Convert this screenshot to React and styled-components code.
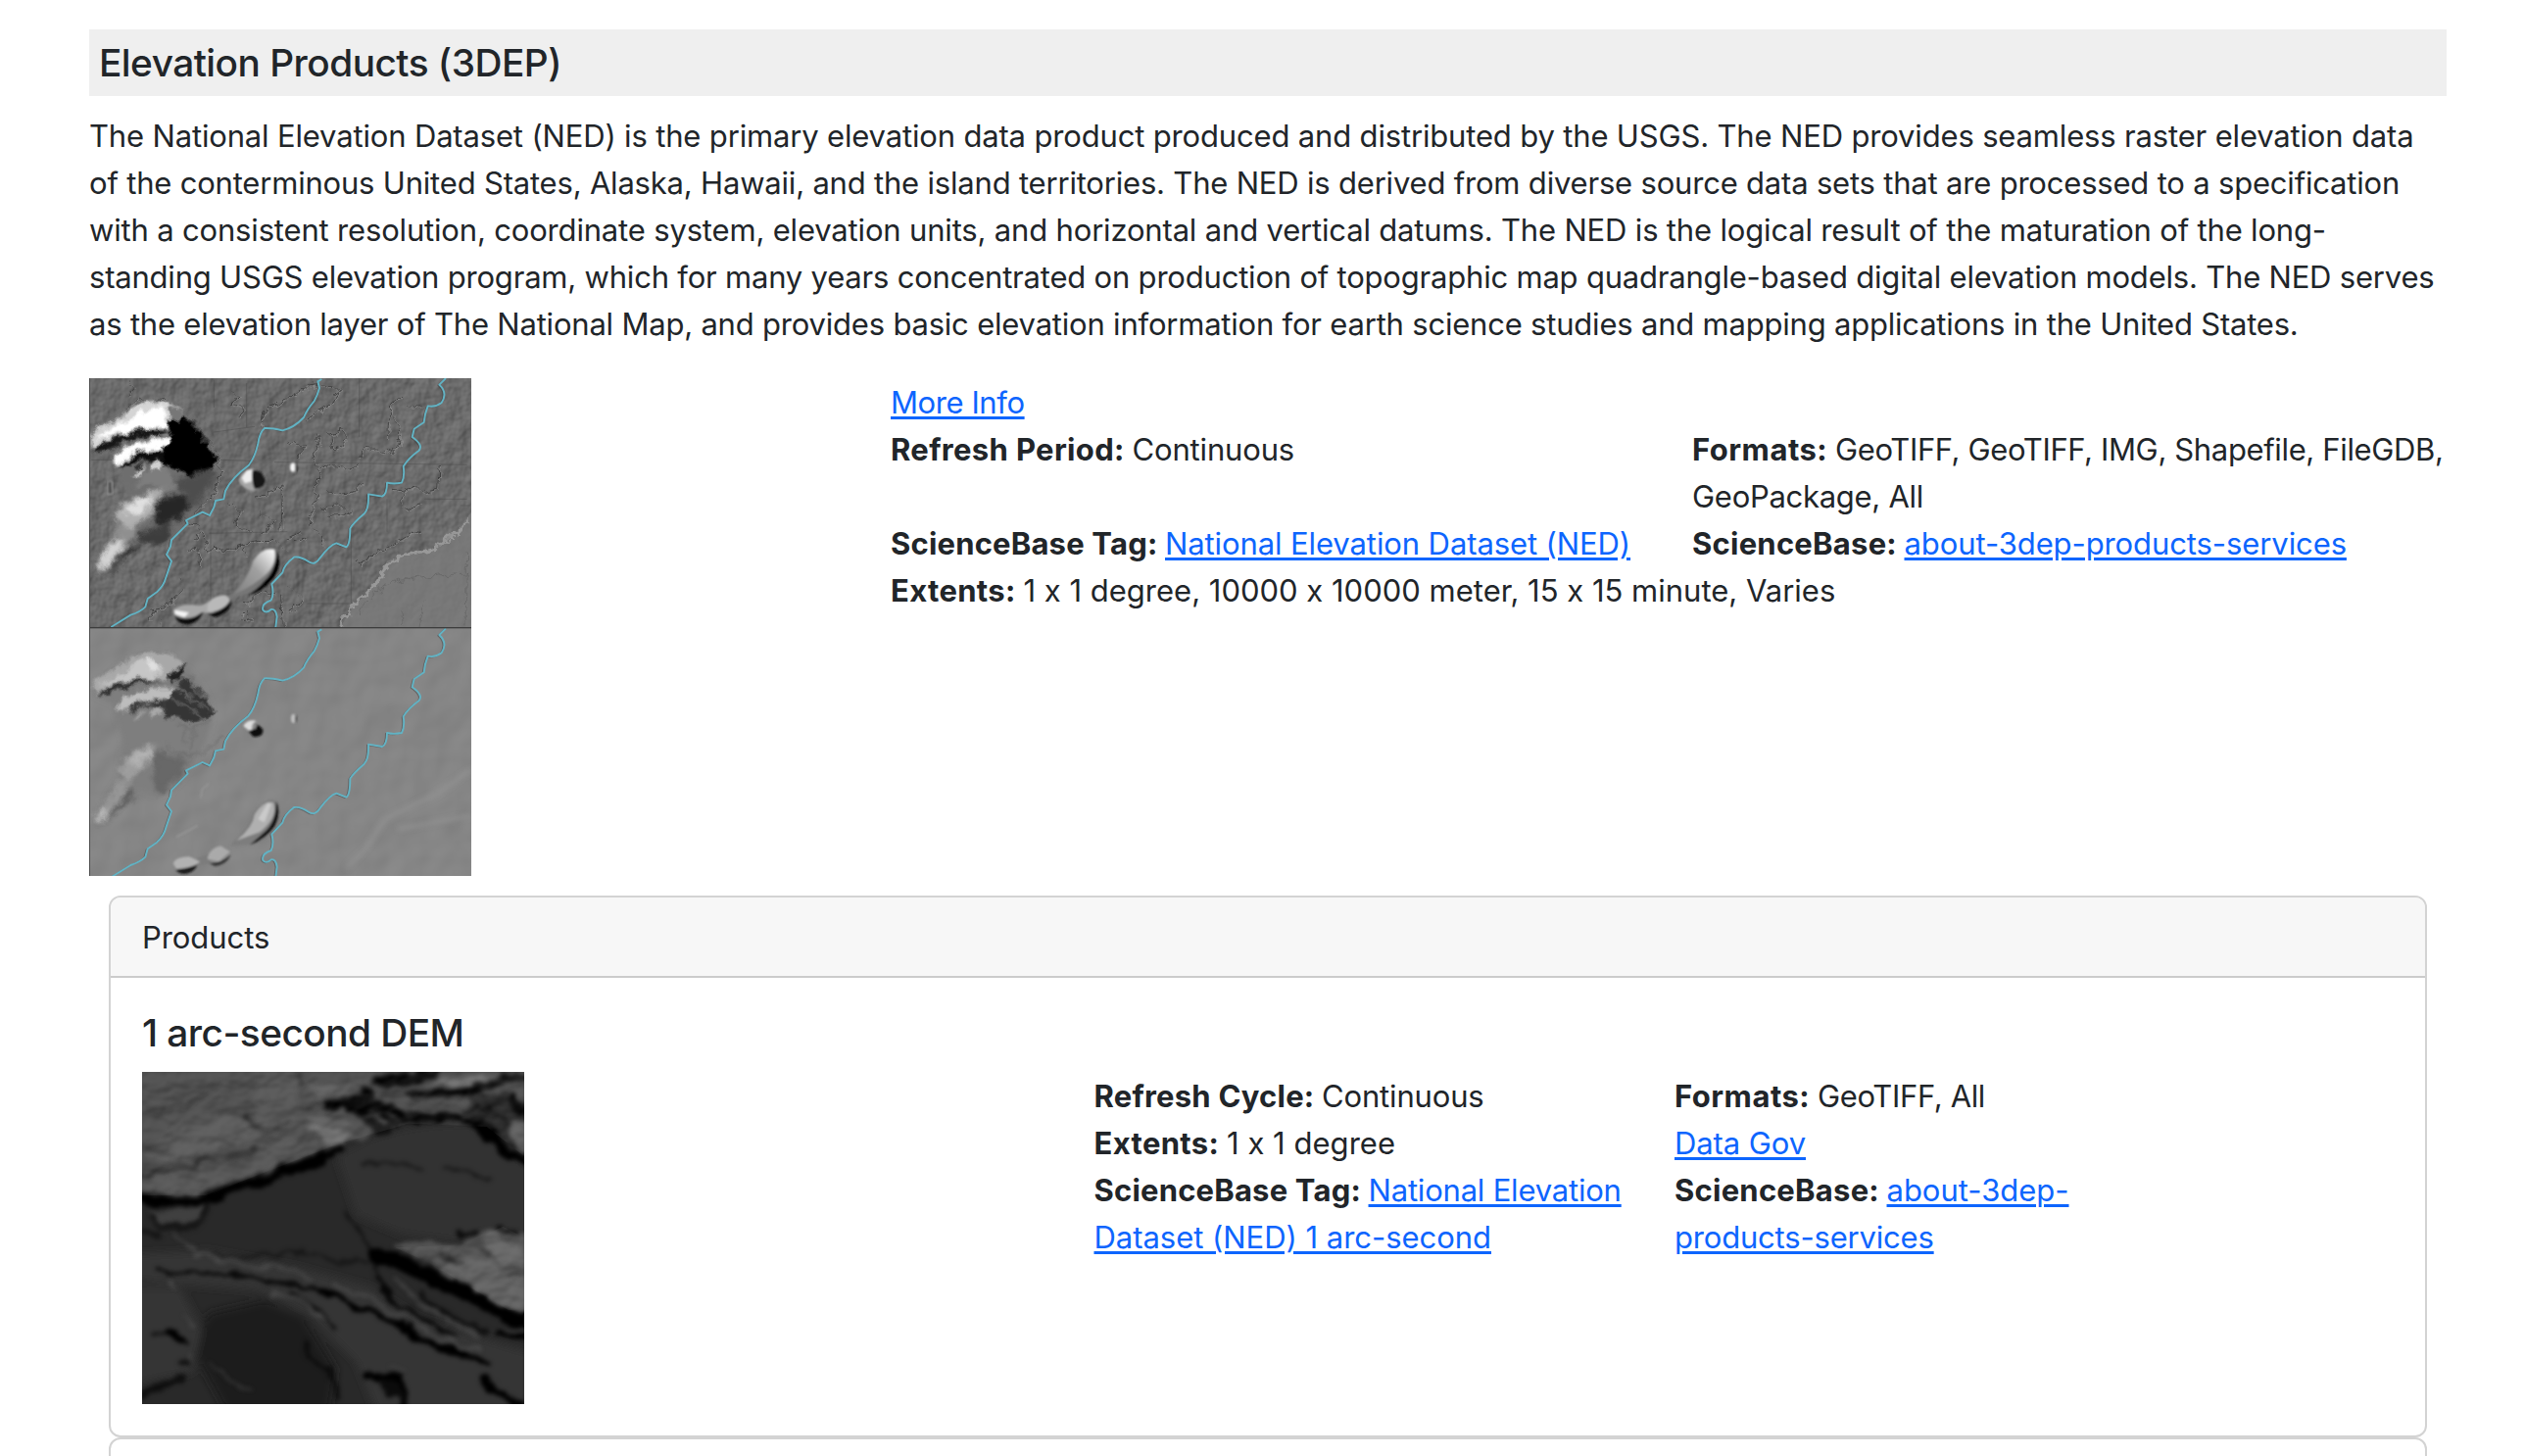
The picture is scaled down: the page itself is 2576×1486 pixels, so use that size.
import React from "react";
import styled, { createGlobalStyle } from "styled-components";

const GlobalStyle = createGlobalStyle`
  *, *::before, *::after { box-sizing: border-box; }
  html { overflow: hidden; }
  body {
    margin: 0;
    height: 1486px;
    overflow: hidden;
    background: #fff;
    color: #212529;
    font-family: Inter, "Liberation Sans", sans-serif;
    font-size: 31px;
    line-height: 48px;
    font-feature-settings: "calt" 0;
  }
`;

const Page = styled.main`
  width: 2406px;
  margin-left: 91px;
  padding-top: 30px;
`;
const TitleBar = styled.header`
  padding: 10px;
  background: #efefef;
`;
const Heading = styled.h2`
  margin: 0;
  font-size: 38.8px;
  font-weight: 500;
  line-height: 48px;
  letter-spacing: ${(p) => p.$ls}px;
`;
const Description = styled.p`
  margin: 17px 0 31px;
`;
const Line = styled.span`
  display: block;
  white-space: nowrap;
  letter-spacing: ${(p) => p.$ls}px;
`;
const Overview = styled.section`
  display: grid;
  grid-template-columns: 818px 1fr;
  height: 508px;
`;
const Facts = styled.div`
  display: grid;
  grid-template-columns: 818px 1fr;
  align-content: start;
  padding-top: 1px;
`;
const Fact = styled.div`
  grid-column: ${(p) => (p.$wide ? "1 / -1" : "auto")};
  white-space: nowrap;
`;
const ProductFacts = styled.div`
  padding-top: 1px;
`;
const Label = styled.strong`
  font-weight: 700;
  white-space: pre;
  letter-spacing: ${(p) => p.$ls}px;
`;
const Value = styled.span`
  letter-spacing: ${(p) => p.$ls}px;
`;
const Link = styled.a`
  color: #0d65fe;
  letter-spacing: ${(p) => p.$ls}px;
  text-decoration: underline;
  text-decoration-thickness: 3px;
  text-underline-offset: 3px;
`;
const Card = styled.section`
  width: 2366px;
  margin: ${(p) => p.$top}px 0 0 20px;
  border: 2px solid #d3d3d3;
  border-radius: 12px;
  height: ${(p) => p.$height}px;
  overflow: hidden;
`;
const CardHeader = styled.header`
  padding: 17px 32px 15px;
  background: #f7f7f7;
  border-bottom: 2px solid #cbcbcb;
`;
const CardBody = styled.div`
  padding: 32px;
`;
const ProductRow = styled.div`
  display: grid;
  grid-template-columns: 971.5px 592.5px 1fr;
  margin-top: 16px;
`;
const Picture = styled.svg`
  display: block;
  width: ${(p) => p.$w}px;
  height: ${(p) => p.$h}px;
`;

const RIVER_A =
  "M745 33L733 40L738 60Q732 82 722 100Q700 125 690 150Q660 182 625 190Q590 182 570 183Q555 195 550 230Q540 275 520 298Q470 335 450 375L445 400L420 405L415 425L402 450L380 440L330 465L335 475L285 525L282 545L270 570L285 590L268 640Q262 665 240 685L212 705L205 730Q190 745 160 755L100 792";
const RIVER_B =
  "M1125 30L1105 50Q1132 75 1112 105Q1092 120 1070 115Q1060 140 1058 165L1028 185L1022 210Q1058 235 1042 252Q1010 275 995 300Q1000 330 990 350Q965 355 945 350Q945 385 930 392L888 385Q890 430 875 445Q840 475 832 490Q832 540 820 547L790 535Q770 540 740 580Q725 605 705 592Q680 575 660 578Q630 600 625 625L592 660Q600 690 590 710Q560 720 565 740Q575 752 590 738Q605 735 608 760L604 792";

const CREEKS = [
  "M155 35L170 60L150 80M140 130Q165 95 220 98Q280 90 300 120Q370 170 395 220Q450 290 432 330Q420 400 350 440",
  "M470 70L490 85L470 110L500 115L495 145M565 170Q560 130 600 110Q650 90 700 55Q760 40 800 70L770 110L700 160",
  "M1058 120Q1020 125 995 95Q950 90 955 130Q980 155 985 190Q1000 220 960 260Q920 245 895 250Q860 240 865 270M955 130Q945 170 950 220",
  "M730 200L740 230L720 270L735 310L725 360L735 400L710 450L700 480M620 360Q580 390 540 390M620 365L625 500",
  "M740 300Q800 290 830 310L860 290M760 380Q800 400 840 380L870 350M740 430Q800 400 830 440Q800 460 760 450",
  "M1105 290L1100 370L1060 380L1030 360L1000 375L960 370M1000 380Q970 410 1000 430L1050 420",
  "M640 520L680 500L700 520L660 530M700 480L745 510L750 540M860 600L920 560L960 540L1000 520L1045 490",
  "M320 480Q370 475 380 500L350 520M380 500L400 560M400 555L470 550Q530 525 600 530L640 560M510 550Q500 565 515 575",
  "M220 770L230 740L260 735L300 700L330 670L310 650M260 790L250 770M330 550L370 560L370 610",
  "M500 760L520 740L530 765L500 770M510 720L560 680L600 690M640 660L690 710L640 740L670 750M620 690L625 790",
  "M460 420L500 440L480 480L530 500M560 440L600 470L560 500M640 220L690 240L670 270M770 200L810 190L820 240L780 250Z",
];
const ROADS = "M40 280L160 280M415 35L415 120M515 45L515 180M405 500L405 790M860 30L860 210M835 500L835 720M400 505L640 500M700 720L830 720M435 280L530 283M600 287L1190 295M620 365L625 500M945 400L945 500M1060 400L1190 400M415 195L540 178M1170 420L1200 420";

const Rivers = () => (
  <g fill="none" strokeLinejoin="round">
    <g stroke="#333" strokeWidth="4" opacity=".4" transform="translate(-4 2)">
      <path d={RIVER_A} />
      <path d={RIVER_B} />
    </g>
    <g stroke="#62b3c4" strokeWidth="5.6">
      <path d={RIVER_A} />
      <path d={RIVER_B} />
    </g>
  </g>
);

const DetailedRelief = () => (
  <g clipPath="url(#upper)">
    <rect x="33" y="30" width="1170" height="764" fill="#6b6b6b" />
    <rect x="33" y="30" width="1170" height="764" filter="url(#ground)" opacity=".45" />
    <path d="M800 794L845 725Q910 670 945 590L985 575L1100 548L1150 510L1203 440V794Z" fill="#7c7c7c" opacity=".8" />
    <g fill="none" strokeLinejoin="round" filter="url(#rough)">
      <g stroke="#353535" strokeWidth="3" opacity=".75">{CREEKS.map((d) => <path key={d} d={d} />)}</g>
      <g stroke="#a1a1a1" strokeWidth="2.5" opacity=".55" transform="translate(3 3)">{CREEKS.map((d) => <path key={d} d={d} />)}</g>
      <path d="M800 785L845 720Q925 660 940 605L980 575L1095 550L1140 512L1165 510L1190 460" stroke="#a4a4a4" strokeWidth="9" opacity=".75" />
      <path d="M860 750Q900 670 980 650L1200 625M990 740L995 790M1060 710L1040 790M1190 560L1185 790" stroke="#585858" strokeWidth="3" opacity=".45" />
    </g>
    <path d={ROADS} fill="none" stroke="#484848" strokeWidth="2.5" opacity=".5" />
    <g filter="url(#craggy)">
      <path d="M40 200Q80 150 130 130Q190 80 280 105Q360 130 400 220Q440 300 410 350Q360 450 290 520Q240 550 190 520Q150 540 125 590Q90 630 50 635Q60 570 120 520Q120 420 150 390Q110 320 110 270Q80 260 45 250Z" fill="#6e6e6e" filter="url(#blur8)" />
      <g filter="url(#blur5)">
        <path d="M36 205Q70 170 120 160Q150 110 210 104Q290 95 315 135L270 185Q190 180 130 200L60 240L36 238Z" fill="#d4d4d4" />
        <path d="M50 215Q120 170 170 150Q230 110 265 122L268 182Q170 185 105 205Z" fill="#fff" />
        <path d="M48 240Q130 205 180 190Q230 180 280 195L235 207Q150 210 120 235Q80 265 50 255Z" fill="#151515" />
        <path d="M110 280Q120 238 190 230Q245 200 292 210L275 258Q200 240 150 295L115 300Z" fill="#fff" />
        <path d="M122 303Q150 268 200 250L285 245L270 295Q210 265 180 285Q150 295 130 308Z" fill="#0b0b0b" />
        <path d="M235 290L265 295L285 350L330 360L270 375L220 350L170 365L200 320Z" fill="#7d7d7d" />
      </g>
      <g filter="url(#blur4)">
        <path d="M270 175Q315 125 335 150Q385 190 400 245Q440 280 412 305Q370 345 325 328Q300 305 262 296L258 245Q290 225 285 205Z" fill="#010101" />
        <path d="M280 112L318 130L315 160L285 160Z" fill="#777" />
        <path d="M335 155L370 185L390 230" stroke="#4b4b4b" strokeWidth="5" fill="none" />
        <path d="M225 285L255 290L250 315L225 310ZM165 335L208 288L190 330Z" fill="#d0d0d0" />
        <path d="M170 303L215 280L182 322Z" fill="#303030" />
      </g>
      <g filter="url(#blur8)">
        <path d="M120 465Q122 400 190 395Q230 362 265 375L245 440Q200 450 160 505Z" fill="#b0b0b0" />
        <path d="M140 430L220 388L222 420L165 450Z" fill="#e2e2e2" />
        <path d="M240 400Q300 370 335 400Q350 440 310 460Q260 490 225 460Z" fill="#262626" />
        <path d="M290 345L405 310L415 345L350 430L330 390Z" fill="#4e4e4e" />
        <path d="M180 505L280 470L285 515L250 538Q200 545 185 525Z" fill="#3d3d3d" />
        <path d="M125 480L180 490Q180 550 130 585Q105 620 60 630Q60 580 90 545Z" fill="#8f8f8f" />
        <path d="M75 565Q105 520 140 525L115 575Q85 610 60 620Q55 590 75 565Z" fill="#d4d4d4" />
        <path d="M175 520Q170 570 130 590Q110 620 75 632L115 590Q145 560 175 520Z" fill="#0c0c0c" />
      </g>
    </g>
    <path d="M90 345L103 345L105 385L90 385Z" fill="#444" stroke="#aaa" strokeWidth="3" filter="url(#blur4)" />
    <g filter="url(#blur4)">
      <path d="M490 342Q505 308 535 306L575 345Q570 372 530 375Q500 367 490 342Z" fill="#a5a5a5" />
      <path d="M500 335L515 312L537 308L532 345L510 352Z" fill="#eee" />
      <path d="M533 310L560 318L574 345Q568 370 540 370Q528 345 533 310Z" fill="#141414" />
      <ellipse cx="657" cy="303" rx="9" ry="14" fill="#f6f6f6" />
      <path d="M664 290Q678 305 664 321Z" fill="#111" />
    </g>
    <g filter="url(#blur4)">
      <path d="M465 695Q515 640 530 590Q560 542 600 550Q625 570 610 620Q590 670 530 695Q495 690 470 710Q460 745 420 760Q400 755 383 757Q360 788 325 783Q285 775 288 745Q310 718 350 722Q380 730 400 710Q430 690 465 695Z" fill="#767676" />
      <path d="M475 692Q525 635 535 590Q565 545 600 555Q612 610 550 650Q510 680 475 692Z" fill="url(#ridgeLight)" />
      <path d="M608 557Q628 600 597 644Q560 690 515 696Q550 675 570 650Q605 620 608 557Z" fill="#060606" />
      <path d="M290 740Q310 722 350 724Q380 732 400 712L415 748L375 748Q340 775 300 755Z" fill="#a8a8a8" />
      <path d="M295 760Q340 780 383 745Q370 783 330 784Q300 780 295 760Z" fill="#070707" />
      <path d="M395 730Q400 700 445 694Q470 702 460 722Q430 745 395 745Z" fill="#b9b9b9" />
      <path d="M395 752Q440 748 468 708Q470 748 420 762Z" fill="#0c0c0c" />
      <path d="M295 740L338 748L325 762L295 752Z" fill="#f4f4f4" />
    </g>
  </g>
);

const SmoothRelief = () => (
  <g clipPath="url(#lower)">
    <rect x="33" y="794" width="1170" height="760" fill="#868686" />
    <rect x="33" y="794" width="1170" height="760" filter="url(#softGround)" opacity=".09" />
    <g transform="translate(0 780)">
      <g filter="url(#blur8)" fill="none">
        <path d="M820 750L880 690L940 600L1100 520L1200 450M980 630L1200 590" stroke="#939393" strokeWidth="9" />
        <path d="M50 220Q80 150 180 95Q290 75 360 170Q430 250 400 330Q370 430 280 520Q220 530 180 500Q140 560 60 610Q60 560 120 480Q120 420 140 370Q110 280 110 250Z" fill="#7e7e7e" />
      </g>
      <g filter="url(#craggy)">
        <g filter="url(#blur5)">
          <path d="M38 195Q65 155 110 145Q170 80 240 88Q300 90 315 125L270 175Q190 165 110 185L60 215Z" fill="#a8a8a8" />
          <path d="M55 195L130 160L180 115Q240 100 260 145L240 170Q160 165 100 185Z" fill="#c6c6c6" />
          <path d="M210 110L238 115L245 145L215 150Z" fill="#e0e0e0" />
          <path d="M60 218Q120 178 180 172L255 180Q160 185 105 212Q80 228 60 218Z" fill="#2e2e2e" />
          <path d="M112 262Q130 220 190 212Q240 190 292 200L282 235Q200 225 150 268Z" fill="#bdbdbd" />
          <path d="M145 265Q180 235 270 230L265 268Q230 245 200 250Q175 282 145 265Z" fill="#383838" />
          <path d="M225 258L255 262L245 285L225 280ZM165 300L215 260L195 290Z" fill="#a8a8a8" />
        </g>
        <g filter="url(#blur4)">
          <path d="M262 245L300 205L320 165Q375 190 395 240L418 272Q380 305 340 305Q300 280 266 296Z" fill="#343434" />
          <path d="M268 172L320 125L328 152L290 185Z" fill="#202020" />
          <path d="M300 185L330 230L355 215M340 160L360 205L395 235M280 235L340 255L385 290M310 210L370 250L400 265" fill="none" stroke="#6a6a6a" strokeWidth="5" />
          <path d="M300 310Q360 340 410 290M320 310L330 370M360 320L340 390M255 390Q320 430 400 380L450 340M270 370Q300 410 360 400" fill="none" stroke="#6e6e6e" strokeWidth="4" />
        </g>
        <g filter="url(#blur8)">
          <path d="M130 460Q140 385 230 370L245 395L225 430Q180 440 160 490Z" fill="#9e9e9e" />
          <path d="M150 415L220 380L230 410L165 435Z" fill="#b3b3b3" />
          <path d="M228 385Q280 400 335 425Q300 500 245 518Q222 490 228 385Z" fill="#686868" />
          <path d="M120 485L155 480L140 540Q110 590 55 615Q45 590 80 555Z" fill="#969696" />
          <path d="M160 500L170 530L120 580L75 612L115 560Z" fill="#5f5f5f" />
          <path d="M55 590L80 560L85 595L60 610Z" fill="#bbb" />
        </g>
      </g>
      <g filter="url(#blur4)">
        <path d="M505 315Q515 295 540 298L552 315L530 335Z" fill="#ddd" />
        <path d="M540 302L565 325Q567 352 535 347L520 330L535 325Z" fill="#101010" />
        <path d="M535 305L548 308L542 325L530 322Z" fill="#888" />
        <ellipse cx="658" cy="292" rx="7" ry="14" fill="#c0c0c0" />
        <path d="M665 280Q674 294 663 307Z" fill="#333" />
        <path d="M465 680Q520 625 535 580Q570 535 600 542Q625 565 605 615Q580 660 530 678Z" fill="#7d7d7d" />
        <path d="M485 665Q535 625 540 585Q570 540 597 550Q612 595 555 640Z" fill="#b0b0b0" />
        <path d="M550 600L580 550L590 555L570 610Z" fill="#cacaca" />
        <path d="M605 545Q623 575 602 620Q575 660 525 679L570 640Q608 605 605 545Z" fill="#0d0d0d" />
        <path d="M350 725L400 705L405 735L365 742Z" fill="#7c7c7c" />
        <path d="M290 735Q300 714 340 715L372 730L355 745L300 752Z" fill="#b2b2b2" />
        <path d="M298 754Q325 755 365 738Q355 765 325 768Q303 766 298 754Z" fill="#1a1a1a" />
        <path d="M395 722Q400 690 435 682L465 700L430 730Z" fill="#aaa" />
        <path d="M400 735Q440 735 467 708Q455 740 418 744Z" fill="#343434" />
        <path d="M375 535L378 510L400 490M300 655L365 620" stroke="#989898" strokeWidth="4" fill="none" />
      </g>
    </g>
  </g>
);

const ReliefComparison = () => (
  <Picture $w={390} $h={508} viewBox="33 30 1170 1524" preserveAspectRatio="none">
    <defs>
      <clipPath id="upper"><rect x="33" y="30" width="1170" height="764" /></clipPath>
      <clipPath id="lower"><rect x="33" y="794" width="1170" height="760" /></clipPath>
      <linearGradient id="ridgeLight" x1="0" y1="1" x2="1" y2="0">
        <stop offset="0" stopColor="#808080" />
        <stop offset=".55" stopColor="#a0a0a0" />
        <stop offset="1" stopColor="#fff" />
      </linearGradient>
      <filter id="blur4" x="-20%" y="-20%" width="140%" height="140%"><feGaussianBlur stdDeviation="3" /></filter>
      <filter id="blur5" x="-20%" y="-20%" width="140%" height="140%"><feGaussianBlur stdDeviation="4.5" /></filter>
      <filter id="blur8" x="-20%" y="-20%" width="140%" height="140%"><feGaussianBlur stdDeviation="8" /></filter>
      <filter id="rough" colorInterpolationFilters="sRGB">
        <feTurbulence type="fractalNoise" baseFrequency=".035" numOctaves="3" seed="4" />
        <feDisplacementMap in="SourceGraphic" scale="34" xChannelSelector="R" yChannelSelector="G" />
      </filter>
      <filter id="craggy" colorInterpolationFilters="sRGB">
        <feTurbulence type="fractalNoise" baseFrequency=".03" numOctaves="3" seed="7" />
        <feDisplacementMap in="SourceGraphic" scale="32" xChannelSelector="R" yChannelSelector="G" />
      </filter>
      <filter id="ground" x="0" y="0" width="100%" height="100%" colorInterpolationFilters="sRGB">
        <feTurbulence type="fractalNoise" baseFrequency=".022 .02" numOctaves="3" seed="9" />
        <feDiffuseLighting surfaceScale="7" diffuseConstant=".6" lightingColor="#fff">
          <feDistantLight azimuth="225" elevation="45" />
        </feDiffuseLighting>
      </filter>
      <filter id="softGround" x="0" y="0" width="100%" height="100%" colorInterpolationFilters="sRGB">
        <feTurbulence type="fractalNoise" baseFrequency=".01" numOctaves="2" seed="5" />
        <feDiffuseLighting surfaceScale="18" diffuseConstant=".74" lightingColor="#fff">
          <feDistantLight azimuth="225" elevation="45" />
        </feDiffuseLighting>
      </filter>
    </defs>
    <DetailedRelief />
    <Rivers />
    <SmoothRelief />
    <g clipPath="url(#lower)"><g transform="translate(0 766)"><Rivers /></g></g>
    <rect x="33" y="792" width="1170" height="4" fill="#3d3d3d" />
    <rect x="33" y="30" width="3" height="1524" fill="#4a4a4a" />
  </Picture>
);

const ArcSecondRelief = () => (
  <Picture $w={390} $h={339} viewBox="45 42 1170 1017" preserveAspectRatio="none">
    <defs>
      <filter id="soft" x="-10%" y="-10%" width="120%" height="120%" colorInterpolationFilters="sRGB">
        <feTurbulence type="fractalNoise" baseFrequency=".018" numOctaves="3" seed="3" result="n" />
        <feDisplacementMap in="SourceGraphic" in2="n" scale="42" xChannelSelector="R" yChannelSelector="G" />
        <feGaussianBlur stdDeviation="6.5" />
      </filter>
      <filter id="softer" x="-20%" y="-20%" width="140%" height="140%"><feGaussianBlur stdDeviation="13" /></filter>
      <filter id="rock" x="0" y="0" width="100%" height="100%" colorInterpolationFilters="sRGB">
        <feTurbulence type="fractalNoise" baseFrequency=".012 .018" numOctaves="3" seed="12" />
        <feDiffuseLighting surfaceScale="28" diffuseConstant=".65" lightingColor="#fff">
          <feDistantLight azimuth="240" elevation="45" />
        </feDiffuseLighting>
        <feGaussianBlur stdDeviation="4" />
      </filter>
      <clipPath id="rocky"><path d="M45 42H1215V300L1100 210L860 200L640 265L240 420H45ZM820 580L1030 570L1150 515L1215 550V775L1165 770L920 625Z" /></clipPath>
    </defs>
    <rect x="45" y="42" width="1170" height="1017" fill="#292929" />
    <g filter="url(#softer)">
      <path d="M640 300Q800 190 1060 200L1230 330V540L1000 560L840 540L700 480Z" fill="#313131" />
      <path d="M20 600L250 590L520 640L740 700L900 800L1230 900V1080H760L700 930L560 790L400 710L20 680Z" fill="#363636" />
      <path d="M250 780L420 740L540 790L640 950L620 1080H300L190 880Z" fill="#1e1e1e" />
      <path d="M20 700L160 700L230 830L200 960L20 1000Z" fill="#343434" />
      <path d="M780 930L900 920L1080 950L1150 1080H870L850 990Z" fill="#353535" />
    </g>
    <g filter="url(#soft)">
      <path d="M10 10H1250V120L1060 150L850 160L740 240L640 262L520 315L400 360L240 415H10Z" fill="#4d4d4d" />
      <path d="M390 20L510 20L530 180L440 240L390 170Z" fill="#555" />
      <path d="M170 190L360 165L400 240L300 270L130 320L50 300Z" fill="#595959" />
      <path d="M545 205L650 210L690 245L610 265Z" fill="#757575" />
      <path d="M540 175L660 180L680 205L580 205Z" fill="#606060" />
      <path d="M560 85L700 70L680 110L580 120Z" fill="#606060" />
      <path d="M900 85L1050 55L1130 60L1100 85Z" fill="#727272" />
      <path d="M730 75L880 80L860 125L800 130Z" fill="#464646" />
      <path d="M880 130L1010 145L1030 180L900 170Z" fill="#454545" />
      <path d="M1040 120L1170 100L1250 190V310L1150 260L1050 185Z" fill="#262626" />
      <path d="M1165 240L1180 200L1250 190V295L1190 280Z" fill="#606060" />
      <path d="M20 380L220 325L400 285L480 240L560 275L400 345L230 410L20 415Z" fill="#555" />
      <path d="M60 465L240 455L230 490L130 515L90 500Z" fill="#404040" />
      <path d="M820 580L870 565L1030 570L1080 530L1150 515L1250 550V775L1165 770L1000 680L920 625Z" fill="#525252" />
      <path d="M950 620L1080 610L1250 690V770L1160 765L1040 695Z" fill="#626262" />
      <path d="M1080 545L1120 520L1160 570L1215 600V650L1140 620Z" fill="#666" />
    </g>
    <g fill="none" stroke="#000" strokeLinecap="round" strokeLinejoin="round" filter="url(#soft)">
      <path d="M10 437H240L290 425" strokeWidth="28" />
      <path d="M250 422L340 390L420 380L500 340L580 325L650 275" strokeWidth="28" />
      <path d="M480 345L600 305" strokeWidth="38" />
      <path d="M600 145L720 125L740 105M690 155L800 150L860 185L1000 185L1080 200M870 110L960 105L1080 100M760 68L860 62L940 48" strokeWidth="28" />
      <path d="M680 145L780 160" strokeWidth="45" />
      <path d="M710 180L780 225L800 205M750 165L830 200M1080 90L1150 60L1240 58" strokeWidth="19" stroke="#101010" />
      <path d="M1095 215L1130 255L1165 300L1240 315" strokeWidth="30" />
      <path d="M1185 115L1205 170" strokeWidth="24" />
      <path d="M1105 140L1160 200M1060 150L1140 175" strokeWidth="12" opacity=".6" />
      <path d="M765 600L850 630L950 680L1060 735L1180 795L1250 800" strokeWidth="47" />
      <path d="M1140 850L1250 860" strokeWidth="20" />
      <path d="M600 715L670 745L760 785L850 830L930 880L1020 895L1100 935" strokeWidth="19" />
      <path d="M90 655L250 655L400 675L490 690L590 710" strokeWidth="13" stroke="#0b0b0b" />
      <path d="M760 670L780 710L840 760L900 800L1000 850" strokeWidth="13" stroke="#060606" />
      <path d="M670 480L710 530L760 610L770 680" strokeWidth="9" opacity=".65" />
      <path d="M900 720L940 760L1100 840" strokeWidth="12" opacity=".6" />
      <path d="M70 485L110 520L170 520L230 495L245 455M45 530L100 540" strokeWidth="18" stroke="#151515" />
      <path d="M125 842L150 848L175 860" strokeWidth="27" />
      <path d="M85 845L130 845" strokeWidth="14" opacity=".6" />
      <path d="M170 930L190 930M40 1035L100 1000L170 985" strokeWidth="20" opacity=".65" />
      <path d="M735 970L760 985L840 980L850 1060" strokeWidth="25" />
      <path d="M770 990L830 985L850 1055L800 1040Z" fill="#0b0b0b" />
      <path d="M545 870L560 910L620 960L640 1045" strokeWidth="12" opacity=".6" />
      <path d="M1085 985L1130 1020L1210 1065" strokeWidth="22" />
      <path d="M500 720L590 780L640 830" strokeWidth="10" opacity=".65" />
      <path d="M270 600L420 610L530 590L640 620L740 620" strokeWidth="8" opacity=".45" />
      <path d="M970 335L1050 350L1110 370M720 325L850 320L900 345" strokeWidth="10" opacity=".5" />
      <path d="M1025 545L1070 525M1140 515L1190 535" strokeWidth="17" opacity=".75" />
      <path d="M970 605L1020 630M1090 580L1110 600M1170 665L1200 665" strokeWidth="12" opacity=".55" />
    </g>
    <g fill="none" stroke="#202020" strokeLinecap="round" filter="url(#soft)" opacity=".7">
      <path d="M30 365L130 350L220 315L290 300L390 280" strokeWidth="15" />
      <path d="M365 180L430 230L490 195M520 60L540 85M540 145L590 150" strokeWidth="13" />
      <path d="M60 155L140 155L210 130L280 65M50 275L130 300" strokeWidth="9" opacity=".6" />
    </g>
    <g fill="none" stroke="#585858" strokeLinecap="round" filter="url(#soft)" opacity=".6">
      <path d="M640 700L740 730L850 800L960 860L1080 895M820 680L900 750L1020 820L1080 850" strokeWidth="10" />
      <path d="M200 600L400 640L500 640L560 680M440 720L520 740L600 800M150 550L200 590M130 680L150 700" strokeWidth="9" />
      <path d="M250 940L370 1020M790 940L860 960M1155 840L1215 835M170 795L200 830M190 900L200 930" strokeWidth="8" opacity=".7" />
    </g>
    <g clipPath="url(#rocky)">
      <rect x="45" y="42" width="1170" height="1017" filter="url(#rock)" opacity=".12" />
    </g>
  </Picture>
);

const DESCRIPTION = [
  [-0.162, "The National Elevation Dataset (NED) is the primary elevation data product produced and distributed by the USGS. The NED provides seamless raster elevation data"],
  [-0.195, "of the conterminous United States, Alaska, Hawaii, and the island territories. The NED is derived from diverse source data sets that are processed to a specification"],
  [-0.171, "with a consistent resolution, coordinate system, elevation units, and horizontal and vertical datums. The NED is the logical result of the maturation of the long-"],
  [-0.203, "standing USGS elevation program, which for many years concentrated on production of topographic map quadrangle-based digital elevation models. The NED serves"],
  [-0.204, "as the elevation layer of The National Map, and provides basic elevation information for earth science studies and mapping applications in the United States."],
];

export default function App() {
  return (
    <>
      <GlobalStyle />
      <Page>
        <TitleBar><Heading $ls={-0.523}>Elevation Products (3DEP)</Heading></TitleBar>
        <Description>
          {DESCRIPTION.map(([ls, text]) => <Line key={text} $ls={ls}>{text}</Line>)}
        </Description>
        <Overview>
          <ReliefComparison />
          <Facts>
            <Fact $wide><Link $ls={-0.415}>More Info</Link></Fact>
            <Fact><Label $ls={0.35}>{"Refresh Period: "}</Label><Value $ls={-0.163}>Continuous</Value></Fact>
            <Fact>
              <Label $ls={0.485}>{"Formats: "}</Label><Value $ls={-0.358}>GeoTIFF, GeoTIFF, IMG, Shapefile, FileGDB,</Value>
              <Line $ls={-0.284}>GeoPackage, All</Line>
            </Fact>
            <Fact><Label $ls={0.189}>{"ScienceBase Tag: "}</Label><Link $ls={-0.1}>National Elevation Dataset (NED)</Link></Fact>
            <Fact><Label $ls={0.236}>{"ScienceBase: "}</Label><Link $ls={-0.096}>about-3dep-products-services</Link></Fact>
            <Fact $wide><Label $ls={0.361}>{"Extents: "}</Label><Value $ls={0}>1 x 1 degree, 10000 x 10000 meter, 15 x 15 minute, Varies</Value></Fact>
          </Facts>
        </Overview>
        <Card $top={20} $height={553}>
          <CardHeader><Value $ls={-0.06}>Products</Value></CardHeader>
          <CardBody>
            <Heading $ls={-0.537}>1 arc-second DEM</Heading>
            <ProductRow>
              <ArcSecondRelief />
              <ProductFacts>
                <Fact><Label $ls={0.224}>{"Refresh Cycle: "}</Label><Value $ls={-0.163}>Continuous</Value></Fact>
                <Fact><Label $ls={0.361}>{"Extents: "}</Label><Value $ls={0.03}>1 x 1 degree</Value></Fact>
                <Fact><Label $ls={0.189}>{"ScienceBase Tag: "}</Label><Link $ls={-0.2}>National Elevation</Link></Fact>
                <Fact><Link $ls={-0.033}>Dataset (NED) 1 arc-second</Link></Fact>
              </ProductFacts>
              <ProductFacts>
                <Fact><Label $ls={0.485}>{"Formats: "}</Label><Value $ls={-0.344}>GeoTIFF, All</Value></Fact>
                <Fact><Link $ls={-0.092}>Data Gov</Link></Fact>
                <Fact><Label $ls={0.236}>{"ScienceBase: "}</Label><Link $ls={-0.018}>about-3dep-</Link></Fact>
                <Fact><Link $ls={-0.19}>products-services</Link></Fact>
              </ProductFacts>
            </ProductRow>
          </CardBody>
        </Card>
        <Card $top={0} $height={60} />
      </Page>
    </>
  );
}
